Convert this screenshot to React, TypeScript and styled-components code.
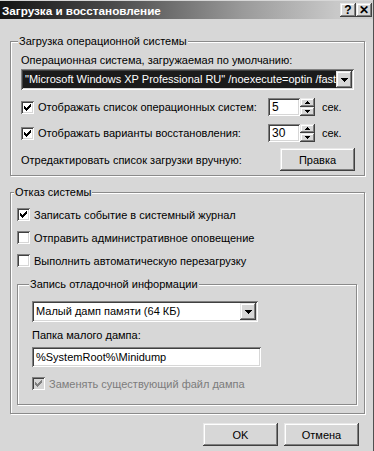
import React from 'react';
import styled, { createGlobalStyle, css } from 'styled-components';

const GlobalStyle = createGlobalStyle`
  html, body {
    margin: 0;
    padding: 0;
    background: #d7d7d7;
  }
  body {
    font-family: "Liberation Sans", Arial, sans-serif;
    font-size: 11px;
    color: #000;
  }
`;

const sunken = css`
  border: none;
  box-shadow:
    inset 1px 1px 0 #808080,
    inset -1px -1px 0 #ffffff,
    inset 2px 2px 0 #404040,
    inset -2px -2px 0 #d7d7d7;
`;

const raised = css`
  border: none;
  box-shadow:
    inset -1px -1px 0 #404040,
    inset 1px 1px 0 #e8e8e8,
    inset -2px -2px 0 #808080,
    inset 2px 2px 0 #ffffff;
`;

const Window = styled.div`
  width: 374px;
  height: 451px;
  box-sizing: border-box;
  background: #d7d7d7;
  border-right: 1px solid #505050;
  display: flex;
  flex-direction: column;
  overflow: hidden;
`;

const TitleBar = styled.div`
  height: 18px;
  margin-top: 1px;
  background: linear-gradient(to right, #141414 0%, #4a4a4a 30%, #9a9a9a 65%, #c8c8c8 90%, #cecece 100%);
  display: flex;
  align-items: center;
  padding: 0 1px 0 2px;
`;

const Title = styled.div`
  flex: 1;
  color: #fff;
  font-weight: bold;
  font-size: 11.7px;
  white-space: nowrap;
`;

const TitleButton = styled.div`
  ${raised};
  width: 16px;
  height: 14px;
  background: #d7d7d7;
  display: flex;
  align-items: center;
  justify-content: center;
  font-weight: bold;
  font-size: 12px;
  line-height: 1;
`;

const Body = styled.div`
  display: flex;
  flex-direction: column;
  padding: 15px 8px 0 10px;
`;

const Group = styled.fieldset<{ $inner?: boolean }>`
  margin: 0;
  min-width: 0;
  border: 1px solid #8a8a8a;
  box-shadow: 1px 1px 0 #fff, inset 1px 1px 0 #fff;
  display: flex;
  flex-direction: column;
  padding: ${p => (p.$inner ? '8px 0 12px 14px' : '5px 9px 4px 10px')};
`;

const Legend = styled.legend`
  padding: 0 1px;
  margin-left: -3px;
  line-height: 14px;
  background: #d7d7d7;
`;

const Text = styled.div`
  height: 14px;
  line-height: 14px;
  white-space: nowrap;
`;

const Combo = styled.div<{ $width: number }>`
  ${sunken};
  width: ${p => p.$width}px;
  height: 21px;
  box-sizing: border-box;
  background: #fff;
  display: flex;
  align-items: stretch;
  padding: 2px;
  margin-top: 2px;
`;

const ComboValue = styled.div<{ $selected?: boolean }>`
  flex: 1;
  overflow: hidden;
  white-space: nowrap;
  line-height: 17px;
  padding-left: 2px;
  background: ${p => (p.$selected ? '#1b1b1b' : '#fff')};
  color: ${p => (p.$selected ? '#fff' : '#000')};
`;

const DropButton = styled.div`
  ${raised};
  width: 16px;
  background: #d7d7d7;
  display: flex;
  align-items: center;
  justify-content: center;
`;

const Row = styled.div<{ $height: number; $gap: number }>`
  display: flex;
  align-items: center;
  height: ${p => p.$height}px;
  margin-top: ${p => p.$gap}px;
`;

const SpreadRow = styled(Row)`
  justify-content: space-between;
`;

const CheckLabel = styled.div<{ $width?: number; $disabled?: boolean }>`
  display: flex;
  align-items: center;
  gap: 4px;
  width: ${p => (p.$width ? `${p.$width}px` : 'auto')};
  white-space: nowrap;
  color: ${p => (p.$disabled ? '#7c7c7c' : '#000')};
`;

const Box = styled.div<{ $disabled?: boolean }>`
  ${sunken};
  width: 13px;
  height: 13px;
  flex: none;
  background: ${p => (p.$disabled ? '#d7d7d7' : '#fff')};
  display: flex;
  align-items: center;
  justify-content: center;
`;

const Spin = styled.div`
  display: flex;
  height: 18px;
  width: 47px;
  flex: none;
`;

const SpinInput = styled.div`
  ${sunken};
  flex: 1;
  background: #fff;
  padding: 0 4px;
  line-height: 18px;
  font-size: 12px;
`;

const SpinButtons = styled.div`
  width: 15px;
  display: flex;
  flex-direction: column;
`;

const SpinButton = styled.div`
  ${raised};
  flex: 1;
  background: #d7d7d7;
  display: flex;
  align-items: center;
  justify-content: center;
`;

const Unit = styled.span`
  margin-left: 7px;
`;

const PushButton = styled.div`
  ${raised};
  width: 75px;
  height: 23px;
  flex: none;
  background: #d7d7d7;
  display: flex;
  align-items: center;
  justify-content: center;
`;

const TextField = styled.div<{ $width: number }>`
  ${sunken};
  width: ${p => p.$width}px;
  height: 20px;
  box-sizing: border-box;
  background: #fff;
  padding: 0 4px;
  line-height: 20px;
  margin-top: 5px;
`;

const Footer = styled.div`
  display: flex;
  justify-content: flex-end;
  gap: 6px;
  margin-top: 9px;
  padding-right: 6px;
`;

const Tick = ({ color }: { color: string }) => (
  <svg width="7" height="7" viewBox="0 0 7 7" shapeRendering="crispEdges">
    <path
      d="M6 0h1v3h-1v1h-1v1h-1v1h-1v1h-1v-1h-1v-1h-1v-3h1v1h1v1h1v-1h1v-1h1z"
      fill={color}
    />
  </svg>
);

const Arrow = ({ up, w = 7 }: { up?: boolean; w?: number }) => {
  const h = Math.ceil(w / 2);
  return (
    <svg width={w} height={h} viewBox={`0 0 ${w} ${h}`} shapeRendering="crispEdges">
      <polygon
        points={up ? `0,${h} ${w / 2},0 ${w},${h}` : `0,0 ${w},0 ${w / 2},${h}`}
        fill="#000"
      />
    </svg>
  );
};

const Check = ({
  checked,
  disabled,
  children,
  width,
}: {
  checked?: boolean;
  disabled?: boolean;
  children: React.ReactNode;
  width?: number;
}) => (
  <CheckLabel $width={width} $disabled={disabled}>
    <Box $disabled={disabled}>{checked && <Tick color={disabled ? '#808080' : '#000'} />}</Box>
    <span>{children}</span>
  </CheckLabel>
);

const SpinBox = ({ value }: { value: string }) => (
  <Spin>
    <SpinInput>{value}</SpinInput>
    <SpinButtons>
      <SpinButton>
        <Arrow up w={5} />
      </SpinButton>
      <SpinButton>
        <Arrow w={5} />
      </SpinButton>
    </SpinButtons>
  </Spin>
);

const App = () => (
  <>
    <GlobalStyle />
    <Window>
      <TitleBar>
        <Title>Загрузка и восстановление</Title>
        <TitleButton>?</TitleButton>
        <TitleButton>✕</TitleButton>
      </TitleBar>
      <Body>
        <Group>
          <Legend>Загрузка операционной системы</Legend>
          <Text>Операционная система, загружаемая по умолчанию:</Text>
          <Combo $width={333}>
            <ComboValue $selected>"Microsoft Windows XP Professional RU" /noexecute=optin /fastd</ComboValue>
            <DropButton>
              <Arrow />
            </DropButton>
          </Combo>
          <Row $height={18} $gap={8}>
            <Check checked width={247}>Отображать список операционных систем:</Check>
            <SpinBox value="5" />
            <Unit>сек.</Unit>
          </Row>
          <Row $height={18} $gap={8}>
            <Check checked width={247}>Отображать варианты восстановления:</Check>
            <SpinBox value="30" />
            <Unit>сек.</Unit>
          </Row>
          <SpreadRow $height={23} $gap={6}>
            <span>Отредактировать список загрузки вручную:</span>
            <PushButton>Правка</PushButton>
          </SpreadRow>
        </Group>
        <Group style={{ marginTop: 9, paddingLeft: 6, paddingRight: 7, paddingBottom: 8 }}>
          <Legend>Отказ системы</Legend>
          <Row $height={17} $gap={2}>
            <Check checked>Записать событие в системный журнал</Check>
          </Row>
          <Row $height={17} $gap={6}>
            <Check>Отправить административное оповещение</Check>
          </Row>
          <Row $height={17} $gap={6}>
            <Check>Выполнить автоматическую перезагрузку</Check>
          </Row>
          <Group $inner style={{ marginTop: 8 }}>
            <Legend>Запись отладочной информации</Legend>
            <Combo $width={226}>
              <ComboValue>Малый дамп памяти (64 КБ)</ComboValue>
              <DropButton>
                <Arrow />
              </DropButton>
            </Combo>
            <Text style={{ marginTop: 6 }}>Папка малого дампа:</Text>
            <TextField $width={229}>%SystemRoot%\Minidump</TextField>
            <Row $height={17} $gap={8}>
              <Check checked disabled>Заменять существующий файл дампа</Check>
            </Row>
          </Group>
        </Group>
        <Footer>
          <PushButton>OK</PushButton>
          <PushButton>Отмена</PushButton>
        </Footer>
      </Body>
    </Window>
  </>
);

export default App;
